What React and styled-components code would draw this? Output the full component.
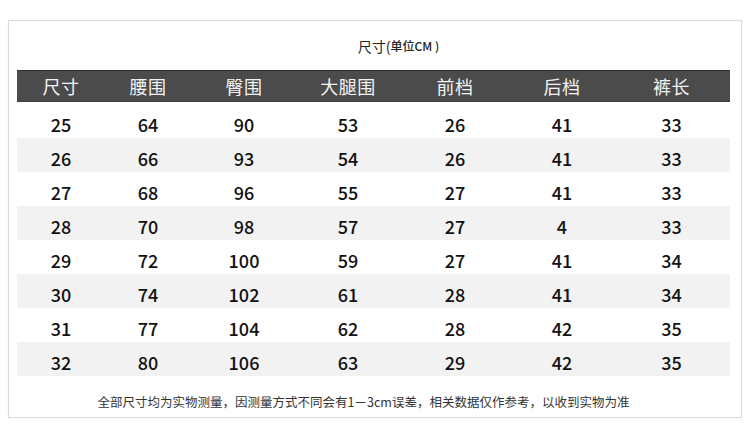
import React from 'react';
import styled, { createGlobalStyle } from 'styled-components';

//Data
const headers = ['尺寸', '腰围', '臀围', '大腿围', '前档', '后档', '裤长'];

const rows = [
	[25, 64, 90, 53, 26, 41, 33],
	[26, 66, 93, 54, 26, 41, 33],
	[27, 68, 96, 55, 27, 41, 33],
	[28, 70, 98, 57, 27, 4, 33],
	[29, 72, 100, 59, 27, 41, 34],
	[30, 74, 102, 61, 28, 41, 34],
	[31, 77, 104, 62, 28, 42, 35],
	[32, 80, 106, 63, 29, 42, 35],
];

//Styled components
const GlobalStyle = createGlobalStyle`
	body {
		margin: 0;
		background: #fff;
		font-family: "Noto Sans CJK SC", "Noto Sans", sans-serif;
	}
`;

const Page = styled.div`
	width: 750px;
	height: 430px;
	padding: 20px 8px 0 8px;
	box-sizing: border-box;
`;

const Card = styled.div`
	box-sizing: border-box;
	width: 734px;
	height: 398px;
	border: 1px solid #dcdcdc;
	box-shadow: 0 0 2px rgba(0, 0, 0, 0.06);
	padding: 0 11px 0 8px;
	display: flex;
	flex-direction: column;
`;

const Title = styled.div`
	height: 49px;
	display: flex;
	align-items: center;
	justify-content: center;
	padding-left: 50px;
	color: #222;
	font-size: 14px;
	& small {
		font-size: 12px;
		font-weight: 500;
	}
`;

const Grid = styled.div`
	display: grid;
	grid-template-columns: 88px 86px 106px 102px 112px 102px 117px;
`;

const HeaderRow = styled(Grid)`
	height: 32px;
	margin-bottom: 2px;
	background: #4b4b4b;
	border-top: 1px solid #2e2e2e;
	border-bottom: 1px solid #3a3a3a;
	box-sizing: border-box;
`;

const HeadCell = styled.div`
	display: flex;
	align-items: center;
	justify-content: center;
	color: #f4f4f4;
	font-size: 18px;
	letter-spacing: 0.5px;
`;

const Row = styled(Grid)`
	height: 34px;
	background: ${props => props.shaded ? '#f2f2f2' : '#fff'};
`;

const Cell = styled.div`
	display: flex;
	align-items: center;
	justify-content: center;
	padding-top: 6px;
	box-sizing: border-box;
	color: #111;
	font-size: 18px;
	font-weight: 500;
`;

const Note = styled.div`
	flex: 1;
	display: flex;
	align-items: center;
	justify-content: center;
	padding: 10px 20px 0 0;
	color: #333;
	font-size: 12.5px;
`;

const App = () => {
	return (
		<Page>
			<GlobalStyle />
			<Card>
				<Title>尺寸(<small> 单位CM )</small></Title>
				<HeaderRow>
					{headers.map((h) => <HeadCell key={h}>{h}</HeadCell>)}
				</HeaderRow>
				{rows.map((row, i) => (
					<Row key={i} shaded={i % 2 === 1}>
						{row.map((v, j) => <Cell key={j}>{v}</Cell>)}
					</Row>
				))}
				<Note>全部尺寸均为实物测量，因测量方式不同会有1－3cm误差，相关数据仅作参考，以收到实物为准</Note>
			</Card>
		</Page>
	);
};

export default App;
